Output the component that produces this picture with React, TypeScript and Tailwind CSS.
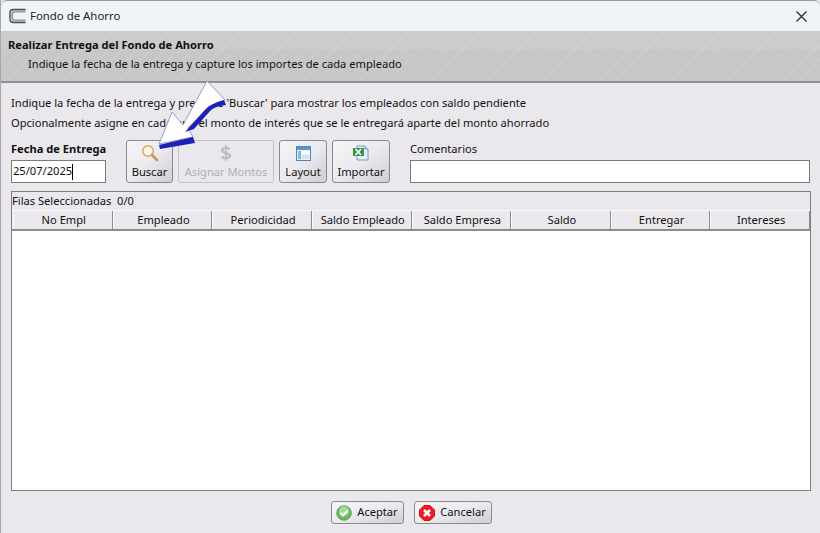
const FONT = "font-['Noto_Sans','Liberation_Sans',sans-serif]";

const columns = [
  "No Empl",
  "Empleado",
  "Periodicidad",
  "Saldo Empleado",
  "Saldo Empresa",
  "Saldo",
  "Entregar",
  "Intereses",
];

function SearchIcon() {
  return (
    <svg width="18" height="18" viewBox="0 0 18 18" fill="none">
      <circle cx="7" cy="7" r="5.200" fill="#fbf3e4" stroke="#d9a263" strokeWidth="1.500" />
      <path d="M11 11l5 5" stroke="#c9955a" strokeWidth="2.600" strokeLinecap="round" />
    </svg>
  );
}

function DollarIcon() {
  return (
    <svg width="12" height="18" viewBox="0 0 14 18" fill="none">
      <path
        d="M11.500 4.600C10.600 3.600 9 3 7 3 4.400 3 2.600 4.200 2.600 6c0 4 9 2.200 9 6 0 1.800-2 3-4.600 3-2.200 0-4-.7-5-2"
        stroke="#bdbcbf"
        strokeWidth="2.800"
      />
      <path d="M7 0v18" stroke="#bdbcbf" strokeWidth="2" />
    </svg>
  );
}

function LayoutIcon() {
  return (
    <svg width="15" height="15" viewBox="0 0 15 15">
      <rect x="0.500" y="0.500" width="14" height="14" fill="#eaf2fb" stroke="#4f86c0" />
      <rect x="1" y="1" width="13" height="3" fill="#5b93cf" />
      <rect x="2" y="5" width="3" height="8" fill="#8fb4dc" />
      <rect x="6" y="5" width="7" height="3" fill="#ffffff" />
      <rect x="6" y="9" width="7" height="4" fill="#d3e2f2" />
    </svg>
  );
}

function ExcelIcon() {
  return (
    <svg width="16" height="16" viewBox="0 0 16 16">
      <path d="M4 1h8l3 3v11H4z" fill="#e6f0fa" stroke="#6c9ccc" />
      <rect x="0" y="3" width="11" height="8" fill="#3f8f4d" />
      <path d="M2.500 4l5.500 6M8 4l-5.500 6" stroke="#ffffff" strokeWidth="1.600" />
      <path d="M12 1v3h3" fill="#cfe0f2" stroke="#6c9ccc" />
    </svg>
  );
}

function OkIcon() {
  return (
    <svg width="16" height="16" viewBox="0 0 16 16">
      <circle cx="8" cy="8" r="7.200" fill="#6fbb63" stroke="#4b9a4b" />
      <circle cx="8" cy="6" r="5" fill="#a4d99a" />
      <path d="M4.500 8l2.500 2.600 4.300-5" fill="none" stroke="#ffffff" strokeWidth="2" />
    </svg>
  );
}

function CancelIcon() {
  return (
    <svg width="16" height="16" viewBox="0 0 16 16">
      <path d="M5 .5h6L15.500 5v6L11 15.500H5L.5 11V5z" fill="#f01c24" stroke="#d8101a" />
      <path d="M5 5l6 6M11 5l-6 6" stroke="#ffffff" strokeWidth="2.600" />
    </svg>
  );
}

function ToolButton({
  icon,
  label,
  width,
  disabled,
}: {
  icon: React.ReactNode;
  label: string;
  width: string;
  disabled?: boolean;
}) {
  return (
    <div
      className={`${width} h-[43px] flex flex-col items-center pt-[2px] rounded-[3px] border leading-[16px] ${
        disabled
          ? "border-[#c4c3c7] text-[#b0afb3]"
          : "border-[#8a8a8c] text-[#111] bg-gradient-to-br from-[#f6f5f7] via-[#ebeaee] to-[#cfced2]"
      }`}
    >
      <div className="h-[20px] flex items-center justify-center">{icon}</div>
      <span className="mt-px whitespace-nowrap">{label}</span>
    </div>
  );
}

function DialogButton({ icon, label, width }: { icon: React.ReactNode; label: string; width: string }) {
  return (
    <div
      className={`${width} h-[23px] flex items-center justify-center gap-[5px] rounded-[3px] border border-[#8a8a8c] bg-gradient-to-br from-[#f6f5f7] via-[#ebeaee] to-[#cfced2] text-[#111]`}
    >
      {icon}
      <span>{label}</span>
    </div>
  );
}

export default function App() {
  return (
    <div className={`${FONT} relative w-[820px] h-[533px] overflow-hidden flex flex-col bg-[#eae8ed] border-l border-l-[#a8a8a8] text-[11.14px] text-[#111]`}>
      {/* title bar */}
      <div className="h-[31px] shrink-0 flex items-center pl-[8px] pr-[13px] bg-[#eff4f9] border-t border-t-[#9a9a9a] rounded-t-[6px]">
        <svg width="17" height="16" viewBox="0 0 17 16" fill="none">
          <path d="M16.500 1.500H4.500C2 1.500 1 2.500 1 5v6c0 2.500 1 3.500 3.500 3.500h12" stroke="#4a4a4a" strokeWidth="1.400" />
          <path d="M16.500 12.500H6c-1.800 0-2.800-1-2.800-2.800V6.300c0-1.800 1-2.800 2.800-2.800h10.500" stroke="#9a9a9a" strokeWidth="1.800" />
        </svg>
        <span className="ml-[4px] text-[11.4px] text-[#222]">Fondo de Ahorro</span>
        <svg className="ml-auto" width="11" height="11" viewBox="0 0 11 11">
          <path d="M.5.5l10 10M10.500.5l-10 10" stroke="#222" strokeWidth="1.100" />
        </svg>
      </div>

      {/* banner */}
      <div className="h-[52px] shrink-0 flex flex-col border-b-2 border-b-[#8f8f8f] bg-[repeating-linear-gradient(135deg,#c7c7c7_0px,#c7c7c7_8px,#cecece_9px,#c7c7c7_10px)]">
        <div className="h-[19px] pl-[7px] font-bold leading-[27px] bg-[#ffffff14]">Realizar Entrega del Fondo de Ahorro</div>
        <div className="pl-[27px] leading-[28px]">Indique la fecha de la entrega y capture los importes de cada empleado</div>
      </div>

      {/* body */}
      <div className="flex-1 flex flex-col pl-[10px] pr-[9px]">
        <p className="mt-[10px] leading-[20px]">Indique la fecha de la entrega y presione 'Buscar' para mostrar los empleados con saldo pendiente</p>
        <p className="leading-[20px]">Opcionalmente asigne en cada uno el monto de interés que se le entregará aparte del monto ahorrado</p>

        <div className="mt-[7px] flex items-end">
          <div className="w-[95px] flex flex-col">
            <span className="font-bold leading-[17px] mb-[3px] whitespace-nowrap">Fecha de Entrega</span>
            <div className="h-[23px] flex items-center pl-px bg-white border border-[#7a7a7a]">
              25/07/2025
              <span className="w-px h-[16px] bg-black" />
            </div>
          </div>
          <div className="ml-[20px] flex gap-[5px]">
            <ToolButton width="w-[47px]" label="Buscar" icon={<SearchIcon />} />
            <ToolButton width="w-[96px]" label="Asignar Montos" icon={<DollarIcon />} disabled />
            <ToolButton width="w-[48px]" label="Layout" icon={<LayoutIcon />} />
            <ToolButton width="w-[58px]" label="Importar" icon={<ExcelIcon />} />
          </div>
          <div className="ml-[20px] mr-px flex-1 flex flex-col">
            <span className="leading-[17px] mb-[3px]">Comentarios</span>
            <div className="h-[23px] bg-white border border-[#7a7a7a]" />
          </div>
        </div>

        {/* grid */}
        <div className="mt-[8px] h-[300px] flex flex-col border border-[#7f7f7f]">
          <div className="h-[18px] leading-[17px]">Filas Seleccionadas&nbsp; 0/0</div>
          <div className="h-[21px] pl-[1px] grid grid-cols-8 border-t border-t-[#fafafa] border-b-2 border-b-[#8c8c8c]">
            {columns.map((c) => (
              <div key={c} className="pl-[2px] text-center leading-[18px] border-l border-l-[#fafafa] border-r border-r-[#8c8c8c] whitespace-nowrap">
                {c}
              </div>
            ))}
          </div>
          <div className="flex-1 bg-white" />
        </div>

        {/* footer */}
        <div className="mt-[10px] flex justify-center gap-[10px]">
          <DialogButton width="w-[73px]" label="Aceptar" icon={<OkIcon />} />
          <DialogButton width="w-[78px]" label="Cancelar" icon={<CancelIcon />} />
        </div>
      </div>

      {/* annotation arrow over the form */}
      <svg className="absolute -left-px top-0 pointer-events-none" width="820" height="533" viewBox="0 0 820 533">
        <path
          d="M207 81L225 100L209 106L188 128L193 137L159 144L172 112L183 125Z"
          fill="#ffffff"
          stroke="#9a9ad0"
          strokeWidth="1"
          strokeLinejoin="round"
        />
        <path d="M224 100L226 105Q216 106 211 110L194 129L185 132Q196 120 205 110Q212 103 224 100Z" fill="#1a22b8" />
        <path d="M193 137L195 143L160 149L159 145Z" fill="#1a22b8" />
      </svg>
    </div>
  );
}
